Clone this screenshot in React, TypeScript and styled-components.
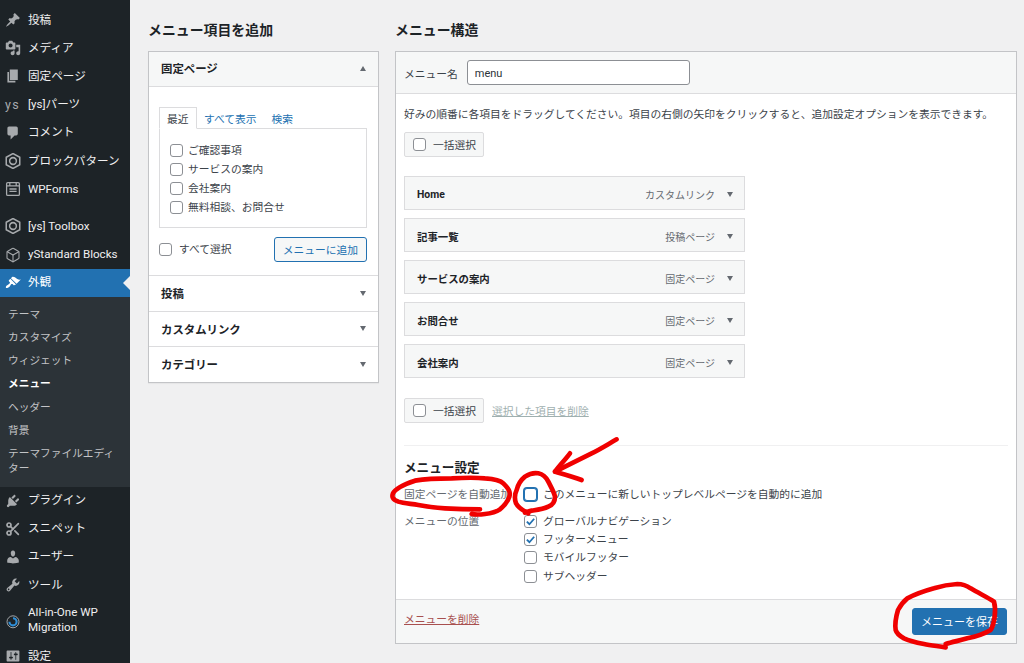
import React from "react";
import styled, { createGlobalStyle } from "styled-components";
import { Scissors, Box } from "lucide-react";

const GlobalStyle = createGlobalStyle`
  html, body {
    margin: 0;
    height: 663px;
    overflow: hidden;
    background: #f0f0f1;
  }
  body {
    font-family: Roboto, "Noto Sans CJK JP", sans-serif;
    font-size: 10.75px;
    color: #3c434a;
  }
  * { box-sizing: border-box; }
`;

const Page = styled.div`
  position: relative;
  display: flex;
  width: 1024px;
  height: 663px;
  overflow: hidden;
`;

/* sidebar */
const Sidebar = styled.nav`
  flex: 0 0 130px;
  height: 663px;
  padding-top: 6px;
  background: #1d2327;
  overflow: hidden;
`;

const MenuRow = styled.div<{ $active?: boolean; $tall?: boolean }>`
  position: relative;
  display: flex;
  align-items: center;
  gap: 7px;
  height: ${({ $tall }) => ($tall ? "43px" : "28.2px")};
  padding-left: 5px;
  font-size: 11.6px;
  line-height: 15px;
  color: ${({ $active }) => ($active ? "#fff" : "#f0f0f1")};
  background: ${({ $active }) => ($active ? "#2271b1" : "transparent")};
  svg { flex: 0 0 16px; color: ${({ $active }) => ($active ? "#fff" : "#a7aaad")}; }
`;

const TwoLineLabel = styled.span`
  margin-top: -2px;
`;

const ActiveArrow = styled.span`
  position: absolute;
  right: 0;
  top: 50%;
  margin-top: -7px;
  border: 7px solid transparent;
  border-right-color: #f0f0f1;
  border-left-width: 0;
`;

const MenuGap = styled.div`
  height: 9px;
`;

const YsMark = styled.span`
  flex: 0 0 16px;
  font-size: 12.5px;
  letter-spacing: 1.4px;
  color: #a7aaad;
`;

const SubMenu = styled.div`
  padding: 6px 0;
  background: #2c3338;
`;

const SubItem = styled.div<{ $current?: boolean }>`
  padding: 4px 8px;
  font-size: 10.7px;
  line-height: 15.2px;
  font-weight: ${({ $current }) => ($current ? 700 : 400)};
  color: ${({ $current }) => ($current ? "#fff" : "#c3c4c7")};
`;

/* content */
const Content = styled.main`
  flex: 1;
  display: flex;
  gap: 16px;
  padding: 20px 7px 0 18px;
`;

const LeftColumn = styled.section`
  flex: 0 0 231px;
`;

const RightColumn = styled.section`
  flex: 1;
`;

const ColumnTitle = styled.h2`
  margin: 0 0 11px;
  font-size: 13.9px;
  line-height: 20px;
  font-weight: 700;
  color: #1d2327;
`;

const Accordion = styled.div`
  background: #fff;
  border: 1px solid #c3c4c7;
  box-shadow: 0 1px 1px rgba(0, 0, 0, 0.04);
`;

const AccordionHead = styled.div<{ $open?: boolean }>`
  display: flex;
  align-items: center;
  justify-content: space-between;
  height: ${({ $open }) => ($open ? "35px" : "35.5px")};
  padding: 0 12px ${({ $open }) => ($open ? "2px" : "0")};
  font-size: 11.4px;
  font-weight: 700;
  color: #1d2327;
  background: ${({ $open }) => ($open ? "#f6f7f7" : "#fff")};
  border-top: ${({ $open }) => ($open ? "none" : "1px solid #dcdcde")};
  border-bottom: ${({ $open }) => ($open ? "1px solid #dcdcde" : "none")};
`;

const Caret = styled.span<{ $up?: boolean }>`
  width: 0;
  height: 0;
  border-left: 3.5px solid transparent;
  border-right: 3.5px solid transparent;
  border-top: ${({ $up }) => ($up ? "none" : "5px solid #646970")};
  border-bottom: ${({ $up }) => ($up ? "5px solid #646970" : "none")};
`;

const AccordionBody = styled.div`
  padding: 20px 11px 13px 10px;
`;

const Tabs = styled.div`
  display: flex;
  height: 22px;
  margin-bottom: -1px;
`;

const Tab = styled.div<{ $active?: boolean }>`
  position: relative;
  z-index: 1;
  display: flex;
  align-items: center;
  padding: 0 ${({ $active }) => ($active ? "7px" : "6.5px")};
  font-size: 10.75px;
  color: ${({ $active }) => ($active ? "#3c434a" : "#2271b1")};
  background: ${({ $active }) => ($active ? "#fff" : "transparent")};
  border: 1px solid ${({ $active }) => ($active ? "#dcdcde" : "transparent")};
  border-bottom-color: ${({ $active }) => ($active ? "#fff" : "transparent")};
`;

const TabPanel = styled.div`
  display: flex;
  flex-direction: column;
  height: 100px;
  padding: 12px 10px 10px;
  border: 1px solid #dcdcde;
`;

const CheckRow = styled.label<{ $h?: number; $gap?: number }>`
  display: flex;
  align-items: center;
  gap: ${({ $gap }) => $gap ?? 6}px;
  height: ${({ $h }) => $h ?? 19}px;
  font-size: 10.75px;
  line-height: 15px;
  white-space: nowrap;
`;

const Check = styled.span<{ $focus?: boolean }>`
  flex: 0 0 13px;
  display: inline-flex;
  align-items: center;
  justify-content: center;
  width: 13px;
  height: 13px;
  background: #fff;
  border: 1px solid ${({ $focus }) => ($focus ? "#2271b1" : "#8c8f94")};
  border-radius: 3px;
  box-shadow: ${({ $focus }) => ($focus ? "0 0 0 1px #2271b1" : "none")};
`;

const AddRow = styled.div`
  display: flex;
  align-items: center;
  justify-content: space-between;
  margin-top: 9px;
`;

const OutlineButton = styled.button`
  width: 93px;
  height: 25px;
  padding: 0;
  font: inherit;
  color: #2271b1;
  background: #f6f7f7;
  border: 1px solid #2271b1;
  border-radius: 3px;
`;

const Panel = styled.div`
  display: flex;
  flex-direction: column;
  height: 593px;
  background: #fff;
  border: 1px solid #c3c4c7;
`;

const PanelHead = styled.div`
  display: flex;
  align-items: center;
  gap: 9px;
  height: 42px;
  padding: 0 8px;
  background: #f6f7f7;
  border-bottom: 1px solid #dcdcde;
`;

const FieldLabel = styled.span`
  margin-top: 2px;
`;

const NameInput = styled.input`
  width: 223px;
  height: 25px;
  padding: 1px 7px 0;
  font: inherit;
  font-size: 11px;
  color: #2c3338;
  background: #fff;
  border: 1px solid #8c8f94;
  border-radius: 3px;
`;

const PanelBody = styled.div`
  flex: 1;
  padding: 13px 8px 0;
`;

const Hint = styled.p`
  margin: 0 0 9px;
  line-height: 16px;
  white-space: nowrap;
`;

const BulkSelect = styled.label`
  display: inline-flex;
  align-items: center;
  gap: 7px;
  height: 25px;
  padding: 0 7px 0 8px;
  background: #f6f7f7;
  border: 1px solid #dcdcde;
  border-radius: 2px;
`;

const MenuItems = styled.div`
  display: flex;
  flex-direction: column;
  gap: 8px;
  width: 341px;
  margin-top: 19px;
`;

const MenuItem = styled.div`
  display: flex;
  align-items: center;
  height: 34px;
  padding: 2px 11px 0 12px;
  background: #f6f7f7;
  border: 1px solid #dcdcde;
`;

const ItemTitle = styled.span`
  flex: 1;
  font-weight: 700;
  font-size: 10.4px;
  color: #1d2327;
`;

const ItemType = styled.span`
  margin-right: 12px;
  font-size: 10px;
  color: #646970;
`;

const BulkRow = styled.div`
  display: flex;
  align-items: center;
  gap: 8px;
  margin-top: 20px;
`;

const MutedLink = styled.a`
  color: #9fb0b0;
  text-decoration: underline;
`;

const Divider = styled.hr`
  margin: 22px 0 0;
  border: 0;
  border-top: 1px solid #f0f0f1;
`;

const SettingsTitle = styled.h3`
  margin: 12px 0 7px;
  font-size: 12.6px;
  line-height: 20px;
  font-weight: 700;
  color: #1d2327;
`;

const SettingRow = styled.div`
  display: flex;
  margin-bottom: 8px;
`;

const SettingLabel = styled.div`
  flex: 0 0 120px;
  line-height: 19px;
  color: #646970;
`;

const SettingValues = styled.div`
  display: flex;
  flex-direction: column;
`;

const PanelFoot = styled.div`
  display: flex;
  align-items: center;
  justify-content: space-between;
  height: 44px;
  padding: 0 9px 0 8px;
  background: #f6f7f7;
  border-top: 1px solid #dcdcde;
`;

const DeleteLink = styled.a`
  margin-bottom: 6px;
  color: #a8504f;
  text-decoration: underline;
`;

const SaveButton = styled.button`
  width: 95px;
  height: 27px;
  padding: 0 0 1px;
  font: inherit;
  font-size: 11px;
  color: #fff;
  background: #2271b1;
  border: 1px solid #2271b1;
  border-radius: 3px;
`;

const Scribble = styled.svg`
  position: absolute;
  inset: 0;
  width: 1024px;
  height: 663px;
  pointer-events: none;
`;

const IconSvg = ({ children }: { children: React.ReactNode }) => (
  <svg width="16" height="16" viewBox="0 0 20 20" fill="currentColor">
    {children}
  </svg>
);

const PinIcon = () => (
  <IconSvg>
    <path d="M10.44 3.02l1.82-1.82 6.36 6.35-1.83 1.82c-1.05-.68-2.48-.57-3.41.36l-.75.75c-.92.93-1.04 2.35-.35 3.41l-1.83 1.82-2.41-2.41-2.8 2.79c-.42.42-3.38 2.71-3.8 2.29s1.86-3.39 2.28-3.81l2.79-2.79L4.1 9.36l1.83-1.82c1.05.69 2.48.57 3.4-.36l.75-.75c.93-.92 1.05-2.35.36-3.41z" />
  </IconSvg>
);
const MediaIcon = () => (
  <IconSvg>
    <path d="M13 11V4c0-.55-.45-1-1-1h-1.67L9 1H5L3.67 3H2c-.55 0-1 .45-1 1v7c0 .55.45 1 1 1h10c.55 0 1-.45 1-1zM7 4.5c1.38 0 2.5 1.12 2.5 2.5S8.38 9.5 7 9.5 4.5 8.38 4.5 7 5.62 4.5 7 4.5zM14 6h5v10.5c0 1.38-1.12 2.5-2.5 2.5S14 17.88 14 16.5s1.12-2.5 2.5-2.5c.17 0 .34.02.5.05V9h-3V6zm-4 8.05V13h2v3.5c0 1.38-1.12 2.5-2.5 2.5S7 17.88 7 16.5 8.12 14 9.5 14c.17 0 .34.02.5.05z" />
  </IconSvg>
);
const PagesIcon = () => (
  <IconSvg>
    <path d="M6 15V2h10v13H6zm-1 1h8v2H3V5h2v11z" />
  </IconSvg>
);
const CommentIcon = () => (
  <IconSvg>
    <path d="M5 2h9c1.1 0 2 .9 2 2v7c0 1.1-.9 2-2 2h-2l-5 5v-5H5c-1.1 0-2-.9-2-2V4c0-1.1.9-2 2-2z" />
  </IconSvg>
);
const HexIcon = () => (
  <svg width="16" height="16" viewBox="1 1 18 18" fill="none" stroke="currentColor" strokeWidth="1.7">
    <path d="M10 1.6l7.6 4.2v8.4L10 18.4l-7.6-4.2V5.8z" />
    <circle cx="10" cy="10" r="3.8" />
  </svg>
);
const FormsIcon = () => (
  <svg width="16" height="16" viewBox="0 0 20 20" fill="none" stroke="currentColor" strokeWidth="1.6">
    <rect x="2" y="2" width="16" height="16" rx="1.5" />
    <path d="M2 6h16M6 2v4M14 2v4M5.5 10h9M5.5 13h9" />
  </svg>
);
const BrushIcon = () => (
  <IconSvg>
    <path d="M14.48 11.06L7.41 3.99l1.5-1.5c.5-.56 2.3-.47 3.51.32 1.21.8 1.43 1.28 2.91 2.1 1.18.64 2.45 1.26 4.45.85zm-.71.71L6.7 4.7 4.93 6.47c-.39.39-.39 1.02 0 1.41l1.06 1.06c.39.39.39 1.03 0 1.42-.6.6-1.43 1.11-2.21 1.69-.35.26-.7.53-1.01.84C1.43 13.23.6 15.45 1.27 16.12c.67.67 2.89-.16 4.23-1.5.31-.31.58-.66.84-1.01.58-.78 1.09-1.61 1.69-2.21.39-.39 1.03-.39 1.42 0l1.06 1.06c.39.39 1.02.39 1.41 0z" />
  </IconSvg>
);
const PluginIcon = () => (
  <IconSvg>
    <path d="M13.11 4.36L9.87 7.6 8 5.73l3.24-3.24c.35-.34 1.05-.2 1.56.32.52.51.66 1.21.31 1.55zm-8 1.77l.91-1.12 9.01 9.01-1.19.84c-.71.71-2.63 1.16-3.82 1.16H6.14L4.9 17.26c-.59.59-1.54.59-2.12 0-.59-.58-.59-1.53 0-2.12l1.24-1.24v-3.88c0-1.13.4-3.19 1.09-3.89zm7.26 3.97l3.24-3.24c.34-.35 1.04-.21 1.55.31.52.51.66 1.21.31 1.55l-3.24 3.25z" />
  </IconSvg>
);
const UserIcon = () => (
  <IconSvg>
    <path d="M10 9.25c-2.27 0-2.73-3.44-2.73-3.44C7 4.02 7.82 2 9.97 2c2.16 0 2.98 2.02 2.71 3.81 0 0-.41 3.44-2.68 3.44zm0 2.57L12.72 10c2.39 0 4.52 2.33 4.52 4.53v2.49s-3.65 1.13-7.24 1.13c-3.65 0-7.24-1.13-7.24-1.13v-2.49c0-2.25 1.94-4.48 4.47-4.48z" />
  </IconSvg>
);
const ToolsIcon = () => (
  <IconSvg>
    <path d="M16.68 9.77c-1.34 1.34-3.3 1.67-4.95.99l-5.41 6.52c-.99.99-2.59.99-3.58 0s-.99-2.59 0-3.58l6.52-5.41c-.68-1.65-.35-3.61.99-4.95 1.28-1.28 3.12-1.62 4.72-1.06l-2.89 2.89 2.82 2.82 2.86-2.87c.53 1.58.18 3.39-1.08 4.69zM3.81 16.21c.4.39 1.04.39 1.43 0 .4-.4.4-1.04 0-1.43-.39-.4-1.03-.4-1.43 0-.39.39-.39 1.03 0 1.43z" />
  </IconSvg>
);
const MigrationIcon = () => (
  <svg width="16" height="16" viewBox="0 0 20 20" fill="none">
    <circle cx="10" cy="11" r="7.5" stroke="#a7aaad" strokeWidth="1.2" />
    <path d="M10 6.5a4.5 4.5 0 1 1-4.5 4.5" stroke="#2f8fd8" strokeWidth="2.6" />
  </svg>
);
const SettingsIcon = () => (
  <IconSvg>
    <path d="M18 16V4c0-.55-.45-1-1-1H3c-.55 0-1 .45-1 1v12c0 .55.45 1 1 1h14c.55 0 1-.45 1-1zM8 11h1c.55 0 1 .45 1 1s-.45 1-1 1H8v1.5c0 .28-.22.5-.5.5s-.5-.22-.5-.5V13H6c-.55 0-1-.45-1-1s.45-1 1-1h1V5.5c0-.28.22-.5.5-.5s.5.22.5.5V11zm5-2h-1c-.55 0-1-.45-1-1s.45-1 1-1h1V5.500c0-.28.22-.5.5-.5s.5.22.5.5V7h1c.55 0 1 .45 1 1s-.45 1-1 1h-1v5.500c0 .28-.22.5-.5.5s-.5-.22-.5-.5V9z" />
  </IconSvg>
);

const CheckMark = () => (
  <svg width="11" height="11" viewBox="0 0 12 12" fill="none" stroke="#2271b1" strokeWidth="2">
    <path d="M2 6.2l2.8 2.8L10 3" />
  </svg>
);

const topMenu: { icon: React.ReactNode; label: string }[] = [
  { icon: <PinIcon />, label: "投稿" },
  { icon: <MediaIcon />, label: "メディア" },
  { icon: <PagesIcon />, label: "固定ページ" },
  { icon: <YsMark>ys</YsMark>, label: "[ys]パーツ" },
  { icon: <CommentIcon />, label: "コメント" },
  { icon: <HexIcon />, label: "ブロックパターン" },
  { icon: <FormsIcon />, label: "WPForms" },
];

const subMenu = ["テーマ", "カスタマイズ", "ウィジェット", "メニュー", "ヘッダー", "背景", "テーマファイルエディター"];
const recentPages = ["ご確認事項", "サービスの案内", "会社案内", "無料相談、お問合せ"];
const menuItems = [
  { title: "Home", type: "カスタムリンク" },
  { title: "記事一覧", type: "投稿ページ" },
  { title: "サービスの案内", type: "固定ページ" },
  { title: "お問合せ", type: "固定ページ" },
  { title: "会社案内", type: "固定ページ" },
];
const locations = [
  { label: "グローバルナビゲーション", checked: true },
  { label: "フッターメニュー", checked: true },
  { label: "モバイルフッター", checked: false },
  { label: "サブヘッダー", checked: false },
];

export default function App() {
  return (
    <Page>
      <GlobalStyle />
      <Sidebar>
        {topMenu.map((m) => (
          <MenuRow key={m.label}>
            {m.icon}
            {m.label}
          </MenuRow>
        ))}
        <MenuGap />
        <MenuRow>
          <HexIcon />
          [ys] Toolbox
        </MenuRow>
        <MenuRow>
          <Box size={16} strokeWidth={1.6} />
          yStandard Blocks
        </MenuRow>
        <MenuRow $active>
          <BrushIcon />
          外観
          <ActiveArrow />
        </MenuRow>
        <SubMenu>
          {subMenu.map((s) => (
            <SubItem key={s} $current={s === "メニュー"}>
              {s}
            </SubItem>
          ))}
        </SubMenu>
        <MenuRow>
          <PluginIcon />
          プラグイン
        </MenuRow>
        <MenuRow>
          <Scissors size={16} strokeWidth={2.6} />
          スニペット
        </MenuRow>
        <MenuRow>
          <UserIcon />
          ユーザー
        </MenuRow>
        <MenuRow>
          <ToolsIcon />
          ツール
        </MenuRow>
        <MenuRow $tall>
          <MigrationIcon />
          <TwoLineLabel>
            All-in-One WP
            <br />
            Migration
          </TwoLineLabel>
        </MenuRow>
        <MenuRow>
          <SettingsIcon />
          設定
        </MenuRow>
      </Sidebar>

      <Content>
        <LeftColumn>
          <ColumnTitle>メニュー項目を追加</ColumnTitle>
          <Accordion>
            <AccordionHead $open>
              固定ページ
              <Caret $up />
            </AccordionHead>
            <AccordionBody>
              <Tabs>
                <Tab $active>最近</Tab>
                <Tab>すべて表示</Tab>
                <Tab>検索</Tab>
              </Tabs>
              <TabPanel>
                {recentPages.map((p) => (
                  <CheckRow key={p} $gap={5}>
                    <Check />
                    {p}
                  </CheckRow>
                ))}
              </TabPanel>
              <AddRow>
                <CheckRow $h={25} $gap={7}>
                  <Check />
                  すべて選択
                </CheckRow>
                <OutlineButton>メニューに追加</OutlineButton>
              </AddRow>
            </AccordionBody>
            <AccordionHead>
              投稿
              <Caret />
            </AccordionHead>
            <AccordionHead>
              カスタムリンク
              <Caret />
            </AccordionHead>
            <AccordionHead>
              カテゴリー
              <Caret />
            </AccordionHead>
          </Accordion>
        </LeftColumn>

        <RightColumn>
          <ColumnTitle>メニュー構造</ColumnTitle>
          <Panel>
            <PanelHead>
              <FieldLabel>メニュー名</FieldLabel>
              <NameInput value="menu" readOnly />
            </PanelHead>
            <PanelBody>
              <Hint>好みの順番に各項目をドラッグしてください。項目の右側の矢印をクリックすると、追加設定オプションを表示できます。</Hint>
              <BulkSelect>
                <Check />
                一括選択
              </BulkSelect>
              <MenuItems>
                {menuItems.map((m) => (
                  <MenuItem key={m.title}>
                    <ItemTitle>{m.title}</ItemTitle>
                    <ItemType>{m.type}</ItemType>
                    <Caret />
                  </MenuItem>
                ))}
              </MenuItems>
              <BulkRow>
                <BulkSelect>
                  <Check />
                  一括選択
                </BulkSelect>
                <MutedLink>選択した項目を削除</MutedLink>
              </BulkRow>
              <Divider />
              <SettingsTitle>メニュー設定</SettingsTitle>
              <SettingRow>
                <SettingLabel>固定ページを自動追加</SettingLabel>
                <CheckRow>
                  <Check $focus />
                  このメニューに新しいトップレベルページを自動的に追加
                </CheckRow>
              </SettingRow>
              <SettingRow>
                <SettingLabel>メニューの位置</SettingLabel>
                <SettingValues>
                  {locations.map((l) => (
                    <CheckRow key={l.label} $h={18.3}>
                      <Check>{l.checked && <CheckMark />}</Check>
                      {l.label}
                    </CheckRow>
                  ))}
                </SettingValues>
              </SettingRow>
            </PanelBody>
            <PanelFoot>
              <DeleteLink>メニューを削除</DeleteLink>
              <SaveButton>メニューを保存</SaveButton>
            </PanelFoot>
          </Panel>
        </RightColumn>
      </Content>

      <Scribble viewBox="0 0 1024 663" fill="none" stroke="#f00000" strokeLinecap="round" strokeLinejoin="round">
        <g transform="translate(385 440) scale(.3333)" strokeWidth="14">
          <path d="M285 208C250 208 215 207 180 205C150 203 125 200 100 195C75 191 55 190 40 185C22 178 20 170 24 160C30 148 50 135 90 122C130 115 165 115 200 115C235 113 270 112 300 115C330 117 345 120 355 130C370 145 378 155 373 170C368 185 360 195 345 208C335 215 320 220 300 222C285 224 270 224 260 222" />
          <path d="M430 220C415 212 400 205 393 190C388 175 390 160 395 150C400 130 410 118 420 110C435 100 450 98 460 100C475 103 485 115 490 125C500 145 508 158 510 170C510 185 502 195 490 200C475 208 455 210 440 212C430 214 425 216 420 218" />
          <path d="M695 -2C670 12 645 28 620 40C580 60 540 80 510 95" />
          <path d="M555 40C540 60 522 78 510 95C535 102 565 110 590 120" />
        </g>
        <g transform="translate(824 570) scale(.3333)" strokeWidth="14">
          <path d="M365 232C340 228 320 226 300 222C275 217 255 212 240 205C225 197 218 190 215 180C212 160 216 140 222 120C230 105 240 93 250 85C275 72 305 62 330 55C355 47 380 43 400 42C415 42 430 48 440 55C465 70 490 82 510 95C514 110 514 125 512 140C510 155 507 170 500 180C480 192 455 200 430 205C405 212 385 216 365 222" />
        </g>
      </Scribble>
    </Page>
  );
}
